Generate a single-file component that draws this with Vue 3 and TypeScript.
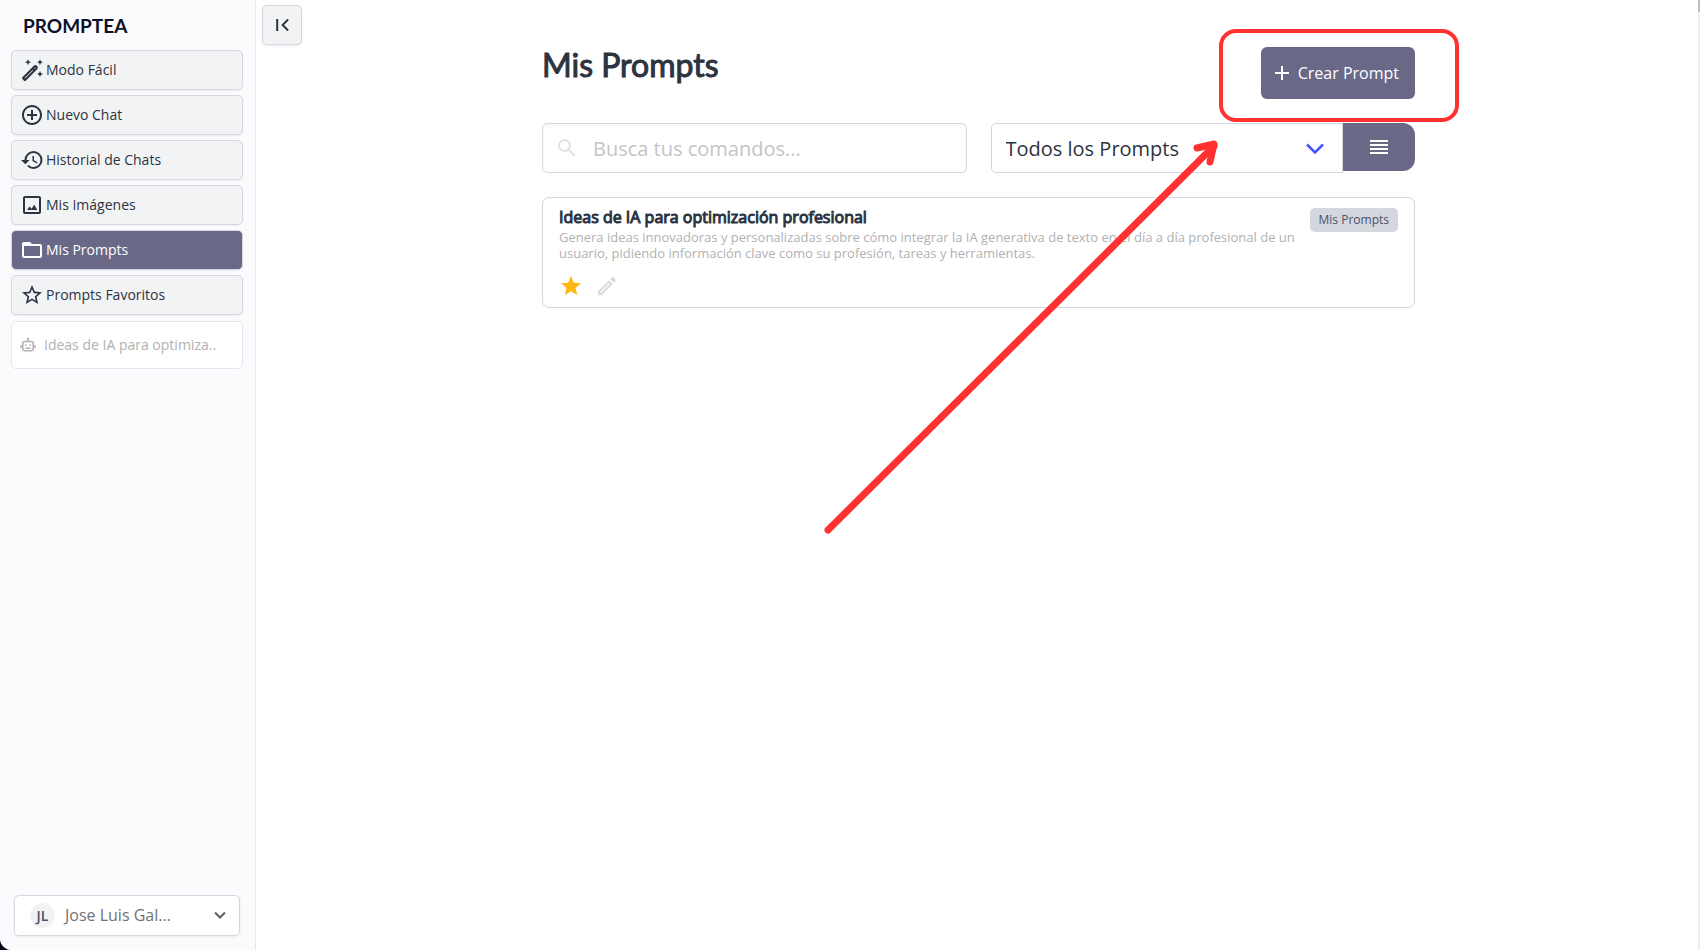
<script setup lang="ts">
import { ref } from 'vue'

interface NavItem {
  label: string
  icon: string
}

const navItems: NavItem[] = [
  {
    label: 'Modo Fácil',
    icon: 'M2.600 19 13.800 7.800a2.200 2.200 0 0 1 3.100 0l.3.3a2.200 2.200 0 0 1 0 3.100L6 22.400a1.600 1.600 0 0 1-2.200 0l-1.200-1.200a1.600 1.600 0 0 1 0-2.200zm1.900 1.100.5.5 8.200-8.200-.5-.5zM14.200 10.400l.5.5 1-1-.5-.5zM8 1.200l.9 2.100 2.100.9-2.100.9L8 7.200l-.9-2.100L5 4.200l2.100-.9zM20 1.200l.9 2.100 2.100.9-2.100.9-.9 2.100-.9-2.100-2.100-.9 2.100-.9zM20 13l.9 2.100 2.100.9-2.100.9-.9 2.100-.9-2.100-2.100-.9 2.100-.9z',
  },
  {
    label: 'Nuevo Chat',
    icon: 'M13 7h-2v4H7v2h4v4h2v-4h4v-2h-4V7zm-1-5C6.480 2 2 6.480 2 12s4.480 10 10 10 10-4.480 10-10S17.520 2 12 2zm0 18c-4.410 0-8-3.590-8-8s3.590-8 8-8 8 3.590 8 8-3.590 8-8 8z',
  },
  {
    label: 'Historial de Chats',
    icon: 'M13.500 3A9 9 0 0 0 4.500 12H1l4.300 4.200L9.600 12H6.500a7 7 0 1 1 7 7c-1.930 0-3.680-.79-4.940-2.060l-1.420 1.420A8.954 8.954 0 0 0 13.500 21a9 9 0 0 0 0-18zM12.500 8v5l4.280 2.540.72-1.210-3.500-2.080V8z',
  },
  {
    label: 'Mis Imágenes',
    icon: 'M19 5v14H5V5h14m0-2H5c-1.100 0-2 .9-2 2v14c0 1.100.9 2 2 2h14c1.100 0 2-.9 2-2V5c0-1.100-.9-2-2-2zM7 17l2.500-3.500 2 2.200 2.800-3.900 3 5.200z',
  },
  {
    label: 'Mis Prompts',
    icon: 'M20 6h-8l-2-2H4c-1.100 0-2 .9-2 2v12c0 1.100.9 2 2 2h16c1.100 0 2-.9 2-2V8c0-1.100-.9-2-2-2zm0 12H4V8h16v10z',
  },
  {
    label: 'Prompts Favoritos',
    icon: 'M22 9.240l-7.190-.62L12 2 9.190 8.630 2 9.240l5.460 4.730L5.820 21 12 17.270 18.180 21l-1.630-7.030L22 9.240zM12 15.400l-3.760 2.270 1-4.280-3.320-2.880 4.380-.38L12 6.100l1.710 4.040 4.380.38-3.320 2.880 1 4.280L12 15.400z',
  },
]

const active = ref('Mis Prompts')
const query = ref('')
const filter = ref('Todos los Prompts')
</script>

<template>
  <div class="app">
    <aside class="sidebar">
      <div class="logo">PROMPTEA</div>
      <nav class="nav">
        <button
          v-for="item in navItems"
          :key="item.label"
          type="button"
          class="nav-item"
          :class="{ active: item.label === active }"
          @click="active = item.label"
        >
          <svg class="icon" viewBox="0 0 24 24"><path :d="item.icon" /></svg>
          <span>{{ item.label }}</span>
        </button>
      </nav>
      <button type="button" class="recent">
        <svg class="robot" viewBox="0 0 16 16">
          <rect x="2.800" y="4.500" width="10.400" height="9.200" rx="2" />
          <path d="M8 4.500V2M1 8v3M15 8v3M5.500 11.300h5" />
          <path d="M7 1.700h2M5.700 7.300v1.400M10.300 7.300v1.400" />
        </svg>
        <span>Ideas de IA para optimiza..</span>
      </button>
      <button type="button" class="user">
        <span class="avatar">JL</span>
        <span class="user-name">Jose Luis Gal...</span>
        <svg class="chevron" viewBox="0 0 14 14"><path d="M2 4.500l5 5 5-5" /></svg>
      </button>
    </aside>

    <main class="main">
      <button type="button" class="collapse" aria-label="Contraer menú">
        <svg class="icon" viewBox="0 0 24 24">
          <path d="M18.800 16.800 14 12l4.800-4.800L17.400 5.800 11.200 12l6.200 6.200zM6.200 6h2v12h-2z" />
        </svg>
      </button>

      <div class="content">
        <header class="header">
          <h1>Mis Prompts</h1>
          <div class="create-wrap">
            <button type="button" class="create">
              <svg class="plus" viewBox="0 0 14 14"><path d="M7 0v14M0 7h14" /></svg>
              <span>Crear Prompt</span>
            </button>
            <div class="highlight"></div>
          </div>
        </header>

        <div class="filters">
          <label class="search">
            <svg class="icon" viewBox="0 0 24 24">
              <path d="M15.500 14h-.79l-.28-.27A6.471 6.471 0 0 0 16 9.500 6.500 6.500 0 1 0 9.500 16c1.610 0 3.090-.59 4.230-1.570l.27.28v.79l5 4.990L20.490 19l-4.990-5zm-6 0C7.010 14 5 11.990 5 9.500S7.010 5 9.500 5 14 7.010 14 9.500 11.990 14 9.500 14z" />
            </svg>
            <input v-model="query" type="text" aria-label="Buscar" placeholder="Busca tus comandos..." />
          </label>
          <div class="filter-group">
            <div class="select-wrap">
              <select v-model="filter" aria-label="Filtro">
                <option>Todos los Prompts</option>
                <option>Mis Prompts</option>
              </select>
              <svg class="select-arrow" viewBox="0 0 18 12"><path d="M1 1.500l8 8 8-8" /></svg>
            </div>
            <button type="button" class="view" aria-label="Vista de lista">
              <svg viewBox="0 0 18 14"><path d="M0 1h18M0 5h18M0 9h18M0 13h18" /></svg>
            </button>
          </div>
        </div>

        <article class="card">
          <div class="card-text">
            <h2>Ideas de IA para optimización profesional</h2>
            <p>
              Genera ideas innovadoras y personalizadas sobre cómo integrar la IA generativa de texto en el día a día
              profesional de un usuario, pidiendo información clave como su profesión, tareas y herramientas.
            </p>
            <div class="actions">
              <button type="button" class="favorite" aria-label="Favorito">
                <svg class="icon" viewBox="0 0 24 24">
                  <path d="M12 17.270 18.180 21l-1.640-7.030L22 9.240l-7.190-.61L12 2 9.190 8.630 2 9.240l5.460 4.730L5.820 21z" />
                </svg>
              </button>
              <button type="button" class="edit" aria-label="Editar">
                <svg class="icon" viewBox="0 0 24 24">
                  <path d="M14.060 9.020l.92.92L5.920 19H5v-.92l9.060-9.060M17.660 3c-.25 0-.51.1-.7.29l-1.830 1.830 3.750 3.750 1.830-1.830a.996.996 0 0 0 0-1.410l-2.340-2.340c-.2-.2-.45-.29-.71-.29zm-3.600 3.190L3 17.250V21h3.750L17.810 9.940l-3.750-3.750z" />
                </svg>
              </button>
            </div>
          </div>
          <span class="tag">Mis Prompts</span>
        </article>

        <svg class="arrow" viewBox="0 0 400 400">
          <path d="M7 393 393 9" />
          <path d="M376 11 393 7 389 25" />
        </svg>
      </div>
      <div class="scroll-track"><div class="scroll-thumb"></div></div>
    </main>
  </div>
</template>

<style>
html {
  background: #050816;
}
</style>

<style scoped>
* {
  box-sizing: border-box;
}

.app {
  display: flex;
  min-height: 100vh;
  overflow: hidden;
  border-bottom-left-radius: 12px;
  background: #fff;
  color: #2d3340;
  font-family: 'Open Sans', 'Noto Sans', sans-serif;
}

button {
  margin: 0;
  padding: 0;
  border: 0;
  background: none;
  color: inherit;
  font: inherit;
  cursor: pointer;
}

svg {
  display: block;
  flex: none;
}

.icon {
  width: 24px;
  height: 24px;
  fill: currentColor;
}

.sidebar {
  display: flex;
  flex: none;
  flex-direction: column;
  width: 256px;
  padding: 14px 12px 14px 11px;
  border-right: 1px solid #e6e6ec;
  background: #fbfbfd;
}

.logo {
  padding-left: 12px;
  color: #0b1128;
  font-family: Lato, sans-serif;
  font-size: 19px;
  font-weight: 700;
  line-height: 24px;
}

.nav {
  display: flex;
  flex-direction: column;
  gap: 5px;
  margin-top: 12px;
}

.nav-item {
  display: flex;
  align-items: center;
  gap: 2px;
  height: 40px;
  padding: 0 8px 1px;
  border: 1px solid #d5d7e1;
  border-radius: 5px;
  background: #f2f3f5;
  box-shadow: 0 1px 2px rgb(0 0 0 / 6%);
  font-size: 14px;
}

.nav-item.active {
  background: #696987;
  color: #fff;
}

.recent {
  display: flex;
  align-items: center;
  gap: 8px;
  height: 48px;
  margin-top: 6px;
  padding: 0 8px 1px;
  border: 1px solid #e6e7ee;
  border-radius: 5px;
  background: #fff;
  color: #b1b1b3;
  font-size: 14px;
}

.robot {
  width: 16px;
  height: 16px;
  fill: none;
  stroke: currentColor;
  stroke-width: 1.500;
}

.user {
  display: flex;
  align-items: center;
  height: 41px;
  margin: auto 3px 0;
  padding: 0 12px 1px 15px;
  border: 1px solid #d5d7e1;
  border-radius: 5px;
  background: #fff;
  box-shadow: 0 1px 3px rgb(0 0 0 / 8%);
  color: #707174;
  font-size: 16px;
}

.avatar {
  width: 25px;
  height: 25px;
  border-radius: 50%;
  background: #f1f2f4;
  color: #4b5168;
  font-size: 14px;
  font-weight: 600;
  line-height: 26px;
  text-align: center;
}

.user-name {
  flex: 1;
  padding-left: 10px;
  text-align: left;
}

.chevron {
  width: 14px;
  height: 14px;
  fill: none;
  stroke: #5d5f66;
  stroke-width: 2;
}

.main {
  position: relative;
  flex: 1;
  min-width: 0;
  padding: 47px 24px 0 25px;
}

.collapse {
  position: absolute;
  top: 5px;
  left: 6px;
  display: flex;
  align-items: center;
  justify-content: center;
  width: 40px;
  height: 40px;
  border: 1px solid #d5d7e1;
  border-radius: 5px;
  background: #f2f3f5;
  box-shadow: 0 1px 3px rgb(0 0 0 / 8%);
}

.content {
  position: relative;
  max-width: 873px;
  margin: 0 auto;
}

.header {
  display: flex;
  justify-content: space-between;
}

h1 {
  margin: 0;
  font-family: Lato, sans-serif;
  font-size: 32px;
  font-weight: 400;
  line-height: 36px;
  -webkit-text-stroke: 1px currentColor;
}

.create-wrap {
  position: relative;
}

.create {
  display: flex;
  align-items: center;
  gap: 9px;
  height: 52px;
  padding: 0 16px 0 14px;
  border-radius: 6px;
  background: #696987;
  color: #fff;
  font-size: 16px;
}

.plus {
  width: 14px;
  height: 14px;
  fill: none;
  stroke: currentColor;
  stroke-width: 2;
}

.highlight {
  position: absolute;
  inset: -18px -44px -23px -42px;
  border: 4px solid #ff3131;
  border-radius: 17px;
  pointer-events: none;
}

.filters {
  display: grid;
  grid-template-columns: 1fr 1fr;
  gap: 24px;
  margin-top: 24px;
}

.search {
  display: flex;
  align-items: center;
  gap: 14px;
  height: 50px;
  padding: 0 12px;
  border: 1px solid #d5d7e1;
  border-radius: 5px;
  box-shadow: inset 0 2px 4px rgb(0 0 0 / 4%);
  color: #e0e0e7;
}

.search input {
  flex: 1;
  min-width: 0;
  padding: 0;
  border: 0;
  outline: 0;
  background: none;
  color: #2d3340;
  font: inherit;
  font-size: 20px;
}

.search input::placeholder {
  color: #c3c4c8;
  opacity: 1;
}

.filter-group {
  display: flex;
  align-items: flex-start;
}

.select-wrap {
  position: relative;
  flex: 1;
}

select {
  width: 100%;
  height: 50px;
  padding: 0 48px 0 14px;
  border: 1px solid #d5d7e1;
  border-radius: 5px 0 0 5px;
  appearance: none;
  background: #fff;
  color: #2d3340;
  font: inherit;
  font-size: 20px;
}

.select-arrow {
  position: absolute;
  top: 20px;
  right: 19px;
  width: 18px;
  height: 12px;
  fill: none;
  stroke: #4353ff;
  stroke-width: 2.500;
  pointer-events: none;
}

.view {
  display: flex;
  align-items: center;
  justify-content: center;
  width: 72px;
  height: 48px;
  border-radius: 0 12px 12px 0;
  background: #696987;
}

.view svg {
  width: 18px;
  height: 14px;
  stroke: #fff;
  stroke-width: 2;
}

.card {
  display: flex;
  align-items: flex-start;
  justify-content: space-between;
  gap: 8px;
  margin-top: 24px;
  padding: 9px 16px;
  border: 1px solid #d5d5e1;
  border-radius: 7px;
}

h2 {
  margin: 0;
  font-size: 16px;
  font-weight: 400;
  line-height: 20px;
  -webkit-text-stroke: 1px currentColor;
}

p {
  margin: 2px 0 0;
  color: #b1b1b3;
  font-size: 13px;
  line-height: 16px;
}

.actions {
  display: flex;
  gap: 12px;
  margin-top: 13px;
}

.favorite {
  color: #ffb711;
}

.edit {
  color: #d9d9e1;
}

.tag {
  flex: none;
  height: 24px;
  margin-top: 1px;
  padding: 0 9px;
  border-radius: 5px;
  background: #d5d7df;
  color: #4b5168;
  font-size: 12px;
  line-height: 24px;
}

.arrow {
  position: absolute;
  top: 90px;
  right: 194px;
  width: 400px;
  height: 400px;
  fill: none;
  stroke: #ff3131;
  stroke-width: 7;
  stroke-linecap: round;
  stroke-linejoin: round;
  pointer-events: none;
}

.scroll-track {
  position: absolute;
  top: 0;
  right: 0;
  bottom: 0;
  width: 2px;
  background: #ededed;
}

.scroll-thumb {
  height: 12px;
  background: #bdbdbd;
}
</style>
